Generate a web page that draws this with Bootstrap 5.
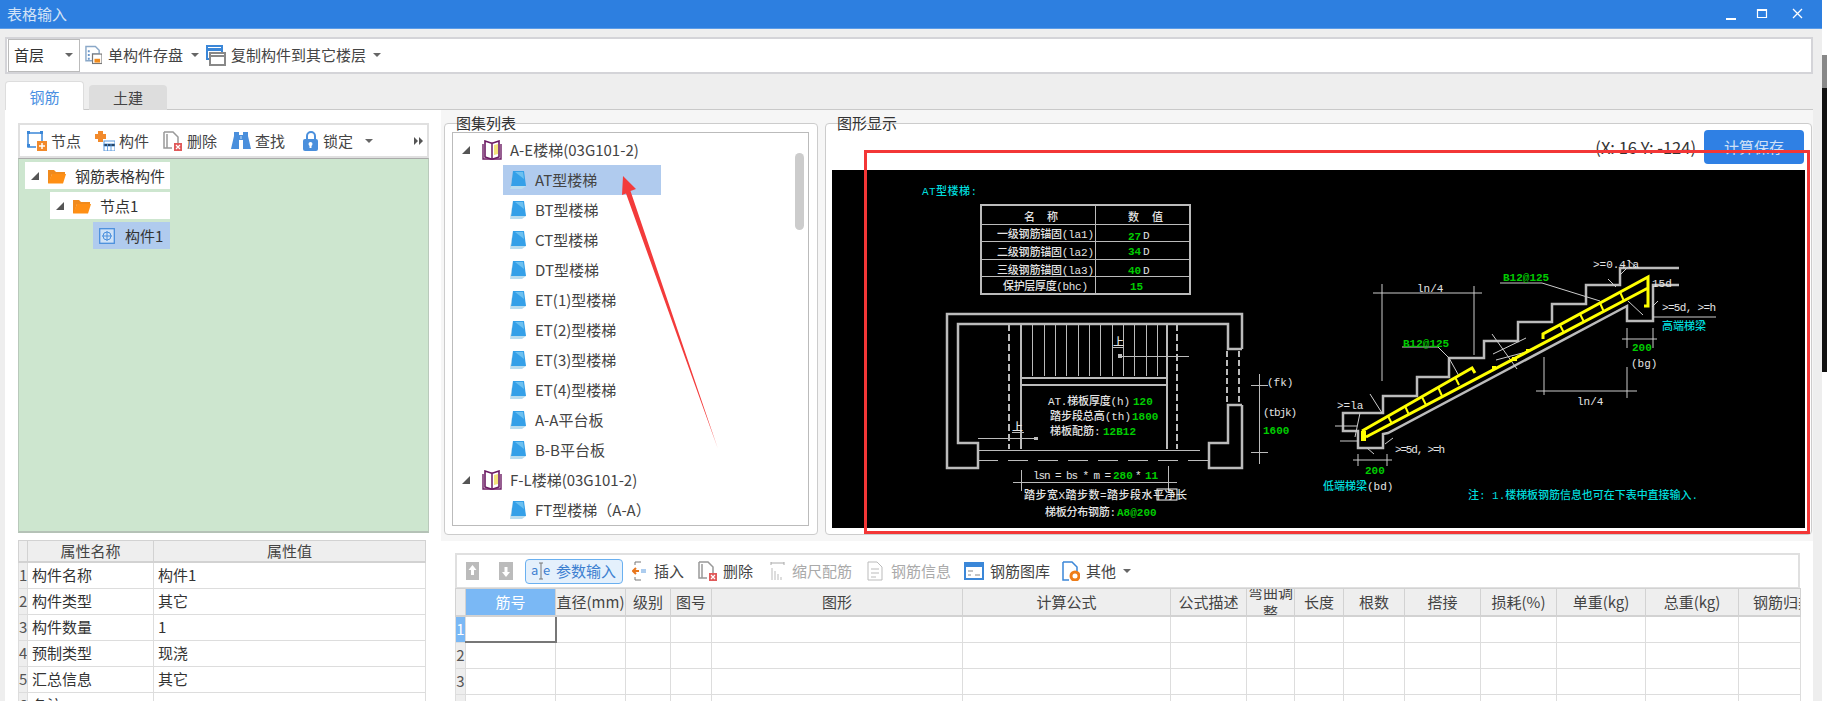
<!DOCTYPE html>
<html lang="zh-CN">
<head>
<meta charset="UTF-8" />
<title>表格输入</title>
<link href="https://cdn.jsdelivr.net/npm/bootstrap@5.3.3/dist/css/bootstrap.min.css" rel="stylesheet" />
<style>
  html, body { height: 701px; overflow: hidden; }
  body { font-family: "Noto Sans CJK SC", "Noto Sans", sans-serif; font-size: 15px; line-height: 20px; color: #444; background: #fff; }
  .shell { width: 1827px; height: 701px; position: relative; }
  .win { width: 1822px; height: 701px; background: #eee; }
  .edge { width: 5px; height: 701px; }
  .edge-gray { height: 33px; margin-top: 55px; background: #888; }
  .edge-black { height: 284px; background: #111; }

  .titlebar { height: 29px; background: #2d7fe0; color: #d3e3f7; padding-left: 7px; border-bottom: 1px solid #5b9ce8; }
  .topbar { height: 38px; margin: 8px 9px 0 5px; background: #fff; border: 2px solid #d4d4d8; padding-left: 1px; }
  .floor-box { width: 72px; height: 33px; border: 1px solid #bbb; padding-left: 5px; padding-right: 6px; margin-right: 5px; color: #333; flex: none; }
  .caret-mark { width: 0; height: 0; border-left: 4px solid transparent; border-right: 4px solid transparent; border-top: 4px solid #666; display: inline-block; flex: none; }
  .tabrow { height: 36px; margin: 0 9px 0 5px; padding-top: 7px; border-bottom: 1px solid #c9c9c9; }
  .tab-on { width: 79px; height: 29px; background: #fff; border: 1px solid #ddd; border-bottom: 0; border-radius: 4px 4px 0 0; color: #4a90e2; text-align: center; line-height: 29px; }
  .tab-off { width: 78px; height: 25px; margin: 4px 0 0 5px; background: #ddd; border-radius: 4px 4px 0 0; text-align: center; line-height: 26px; }

  /* exact toolbar spacing from the picture */
  .gl-5 { margin-left: 5px; } .gl-6 { margin-left: 6px; } .gl-7 { margin-left: 7px; } .gl-8 { margin-left: 8px; } .gl-9 { margin-left: 9px; }
  .gl-12 { margin-left: 12px; } .gl-13 { margin-left: 13px; } .gl-14 { margin-left: 14px; } .gl-15 { margin-left: 15px; } .gl-17 { margin-left: 17px; } .gl-18 { margin-left: 18px; } .gl-20 { margin-left: 20px; }

  .pane { height: 591px; margin: 0 9px 0 5px; background: #fff; }
  .left-col { width: 436px; flex: none; padding: 13px 12px 0 13px; }
  .bar { height: 35px; border: 2px solid #e0e0e0; background: #fff; padding-left: 7px; }
  .bar-item { height: 30px; gap: 4px; }
  .tree-green { height: 375px; background: #cde6cf; border: 1px solid #b9c9bb; border-top-color: #aaa; border-bottom: 2px solid #b5c2b7; padding: 3px 0 0 6px; }
  .node { height: 27px; width: 145px; margin-bottom: 3px; background: #fff; color: #333; padding-left: 6px; }
  .node svg { margin: 0 9px; flex: none; }
  .node-2 { width: 120px; margin-left: 25px; }
  .node-3 { width: 77px; margin-left: 68px; background: #b0cbee; padding-left: 0; }
  .node-3 svg { margin: 0 10px 0 6px; }
  .tri { width: 0; height: 0; border-left: 8px solid transparent; border-bottom: 8px solid #555; display: inline-block; flex: none; }

  .data-grid { table-layout: fixed; border-collapse: collapse; background: #fff; color: #333; }
  .data-grid th, .data-grid td { border: 1px solid #ddd; height: 26px; padding: 0; overflow: hidden; white-space: nowrap; font-weight: 400; }
  .data-grid th { background: #eee; text-align: center; color: #444; border-color: #d2d2d2; border-bottom-width: 2px; }
  .data-grid td.pad { padding-left: 4px; }
  .data-grid .rowno { background: #eee; text-align: center; font-size: 15px; color: #555; }
  .data-grid .hot { background: #7ab8f5; color: #fff; }
  .data-grid td.cur { border-right: 2px solid #777; border-bottom: 2px solid #777; }
  .wrap-head { height: 26px; overflow: hidden; display: flex; align-items: center; white-space: normal; }
  .clip-head { text-align: left !important; padding-left: 14px !important; }
  .prop-grid { width: 407px; margin-top: 7px; }
  .prop-grid th { height: 21px; }

  .right-col { width: 1372px; flex: none; background: #f6f6f6; }
  .upper { height: 430px; padding: 13px 0 0 3px; gap: 7px; }
  .fset { position: relative; flex: none; border: 1px solid #ccc; border-radius: 4px; background: #fff; height: 412px; }
  .fset-title { position: absolute; top: -11px; left: 11px; line-height: 20px; color: #333; }
  .fset-list { width: 374px; padding: 8px 8px 9px 7px; }
  .list-box { height: 394px; border: 1px solid #bbb; position: relative; overflow: hidden; padding: 2px 0 0 9px; }
  .list-row { height: 30px; color: #444; }
  .list-kid { width: 158px; margin-left: 41px; padding-left: 7px; gap: 8px; }
  .list-kid.sel { background: #b0cbee; }
  .list-head svg { margin: 0 8px 0 12px; }
  .scroll-thumb { position: absolute; top: 20px; right: 4px; width: 9px; height: 77px; background: #ccc; border-radius: 5px; }
  .fset-view { width: 987px; padding: 6px 6px 7px 6px; }
  .view-top { height: 34px; gap: 8px; margin-bottom: 6px; padding-right: 1px; }
  .coord-read { font-size: 16.5px; color: #333; }
  .calc-btn { width: 100px; height: 34px; background: #2f80e4; color: #cfe1f7; border: 0; border-radius: 4px; font-size: 15px; padding: 0; }
  .cad-box { height: 358px; background: #000; border: 0; }
  .cad-box svg { display: block; }

  .lower { height: 160px; background: #fff; margin-top: 1px; padding: 12px 0 0 14px; }
  .grid-bar { width: 1345px; height: 35px; border: 2px solid #e0e0e0; border-bottom-width: 1px; padding-left: 9px; }
  .grid-bar svg { flex: none; }
  .lower-grid { width: 1345px; }
  .param-btn { height: 25px; padding: 0 6px 0 5px; gap: 5px; background: #e4f0fc; border: 1px solid #6ab0f0; border-radius: 4px; color: #3c7fd0; }
  .off-text { color: #aaa; }

  .cad-white { fill: #e4e4e4; font-size: 11px; font-family: "Liberation Mono", "Noto Sans CJK SC", monospace; font-weight: 500; }
  .cad-green { fill: #0c0; font-size: 11px; font-family: "Liberation Mono", monospace; font-weight: 700; }
  .cad-cyan { fill: #0dd; font-size: 11px; font-family: "Liberation Mono", "Noto Sans CJK SC", monospace; font-weight: 500; }
  .overlay-marks { position: absolute; left: 0; top: 0; pointer-events: none; }
</style>
</head>
<body>
<svg width="0" height="0" class="d-block">
  <defs>
    <symbol id="i-folder" viewBox="0 0 18 16"><path d="M0 2h6l2 2h9v2H4L1 15H0z" fill="#f08a1c"/><path d="M4 6h14l-3 9.500H0z" fill="#ff8f14"/></symbol>
    <symbol id="i-book" viewBox="0 0 20 20"><path d="M3 1v16l6 2h2l6-2V1l-6 2h-2z" fill="#fff" stroke="#6b1a63" stroke-width="1.600"/><path d="M10 3v15" stroke="#6b1a63" stroke-width="1.500"/><path d="M12 5l4-1v10l-4 1z" fill="#f4e37a"/><path d="M1 4v15h18V4" fill="none" stroke="#6b1a63" stroke-width="1.400"/></symbol>
    <symbol id="i-page" viewBox="0 0 17 20"><path d="M3 1h11l2 15H1z" fill="#35a0e8"/><path d="M1 16h15l-4 3H0z" fill="#b9dcee"/><path d="M3 1L1 16l-1 3z" fill="#9fc6dc"/><path d="M5 2h8l1 7z" fill="#6cc0f0"/></symbol>
    <symbol id="i-sheet" viewBox="0 0 18 20"><path d="M1 1h10l4 4v4H8v7H1z" fill="#fff" stroke="#8aa8c8" stroke-width="1.500"/><path d="M3 5h2v2H3zM3 9h2v2H3zM3 13h2v2H3z" fill="#6a98cc"/><rect x="8" y="9" width="10" height="10" fill="#fff" stroke="#777" stroke-width="1.200"/><rect x="10" y="14" width="6" height="4" fill="#f08a1c"/></symbol>
    <symbol id="i-copy" viewBox="0 0 20 21"><rect x="1" y="1" width="15" height="13" fill="#fff" stroke="#3b87d8" stroke-width="2"/><path d="M1 3h15v3H1z" fill="#3b87d8"/><rect x="4" y="8" width="15" height="12" fill="#fff" stroke="#888" stroke-width="2"/><path d="M4 11h15" stroke="#888" stroke-width="2"/></symbol>
    <symbol id="i-node" viewBox="0 0 20 20"><path d="M1 2h14v8M9 16H1V2" fill="none" stroke="#3b87d8" stroke-width="1.500"/><path d="M0 0h3v3H0zM13 0h3v3h-3zM0 13h3v3H0z" fill="#3b87d8"/><rect x="10" y="10" width="10" height="10" fill="#f28a2b"/><path d="M15 12v6M12 15h6" stroke="#fff" stroke-width="1.500"/></symbol>
    <symbol id="i-comp" viewBox="0 0 20 20"><path d="M3 0h5v3h3v5H8v3H3V8H0V3h3z" fill="#f28a2b"/><rect x="9" y="10" width="11" height="10" fill="#fff" stroke="#5a9ade"/><path d="M9 13h11v2H9zM12.500 13v7M16 13v7" stroke="#5a9ade" stroke-width=".9"/></symbol>
    <symbol id="i-del" viewBox="0 0 20 20"><path d="M1 1h9l5 5v7" fill="#fff" stroke="#999" stroke-width="1.500"/><path d="M1 1v16h8M4 3v14" fill="none" stroke="#999" stroke-width="1.500"/><rect x="11" y="12" width="8" height="8" fill="#e05a5a"/><path d="M13 14l4 4M17 14l-4 4" stroke="#fff" stroke-width="1.200"/></symbol>
    <symbol id="i-find" viewBox="0 0 20 20"><path d="M3 1h5v3h4V1h5v4l3 13h-8V9H8v9H0L3 5z" fill="#4a8fdc"/><path d="M9 5h2v3H9z" fill="#8ab8e8"/></symbol>
    <symbol id="i-lock" viewBox="0 0 16 20"><path d="M4 9V5a4 4 0 018 0v4" fill="none" stroke="#4a8fdc" stroke-width="2"/><rect y="8" width="15" height="12" rx="2" fill="#4a8fdc"/><circle cx="7.500" cy="13" r="2" fill="#fff"/><path d="M6.500 13h2v4h-2z" fill="#fff"/></symbol>
    <symbol id="i-item" viewBox="0 0 16 16"><rect x=".7" y=".7" width="14.600" height="14.600" fill="#cfe2f7" stroke="#4a8fdc" stroke-width="1.300"/><circle cx="8" cy="8" r="4" fill="none" stroke="#4a8fdc"/><path d="M8 3v10M3 8h10" stroke="#4a8fdc"/></symbol>
  </defs>
</svg>

<div class="shell d-flex">
  <div class="win d-flex flex-column">
    <div class="titlebar d-flex justify-content-between align-items-center">
      <span>表格输入</span>
      <svg width="88" height="12" viewBox="0 0 88 12" class="me-2">
        <path d="M0 10h10v2H0z" fill="#fff"/>
        <path d="M31.500 1.500h9v8h-9z" fill="none" stroke="#fff" stroke-width="1.200"/><path d="M31 1h10v2H31z" fill="#fff"/>
        <path d="M67 1l9 9M76 1l-9 9" stroke="#fff" stroke-width="1.300"/>
      </svg>
    </div>

    <div class="topbar d-flex align-items-center">
      <div class="floor-box d-flex align-items-center justify-content-between"><span>首层</span><i class="caret-mark"></i></div>
      <svg width="17" height="20"><use href="#i-sheet"/></svg>
      <span class="gl-6">单构件存盘</span><i class="caret-mark gl-8"></i>
      <svg width="20" height="21" class="gl-7"><use href="#i-copy"/></svg>
      <span class="gl-5">复制构件到其它楼层</span><i class="caret-mark gl-7"></i>
    </div>

    <div class="tabrow d-flex">
      <div class="tab-on">钢筋</div>
      <div class="tab-off">土建</div>
    </div>

    <div class="pane d-flex">
      <div class="left-col">
        <div class="bar d-flex align-items-center">
          <div class="bar-item d-flex align-items-center"><svg width="20" height="20"><use href="#i-node"/></svg>节点</div>
          <div class="bar-item d-flex align-items-center gl-14"><svg width="20" height="20"><use href="#i-comp"/></svg>构件</div>
          <div class="bar-item d-flex align-items-center gl-14"><svg width="20" height="20"><use href="#i-del"/></svg>删除</div>
          <div class="bar-item d-flex align-items-center gl-14"><svg width="20" height="20"><use href="#i-find"/></svg>查找</div>
          <div class="bar-item d-flex align-items-center gl-18"><svg width="16" height="20"><use href="#i-lock"/></svg>锁定<i class="caret-mark gl-8"></i></div>
          <svg width="9" height="8" class="ms-auto me-1"><path d="M0 0l4 4-4 4zM5 0l4 4-4 4z" fill="#555"/></svg>
        </div>
        <div class="tree-green">
          <div class="node d-flex align-items-center"><i class="tri"></i><svg width="18" height="16"><use href="#i-folder"/></svg>钢筋表格构件</div>
          <div class="node node-2 d-flex align-items-center"><i class="tri"></i><svg width="18" height="16"><use href="#i-folder"/></svg>节点1</div>
          <div class="node node-3 d-flex align-items-center"><svg width="16" height="16"><use href="#i-item"/></svg>构件1</div>
        </div>
        <table class="data-grid prop-grid">
          <colgroup><col width="9"><col width="126"><col width="272"></colgroup>
          <thead><tr><th></th><th>属性名称</th><th>属性值</th></tr></thead>
          <tbody>
            <tr><td class="rowno">1</td><td class="pad">构件名称</td><td class="pad">构件1</td></tr>
            <tr><td class="rowno">2</td><td class="pad">构件类型</td><td class="pad">其它</td></tr>
            <tr><td class="rowno">3</td><td class="pad">构件数量</td><td class="pad">1</td></tr>
            <tr><td class="rowno">4</td><td class="pad">预制类型</td><td class="pad">现浇</td></tr>
            <tr><td class="rowno">5</td><td class="pad">汇总信息</td><td class="pad">其它</td></tr>
            <tr><td class="rowno">6</td><td class="pad">备注</td><td></td></tr>
          </tbody>
        </table>
      </div>

      <div class="right-col">
        <div class="upper d-flex">
          <div class="fset fset-list">
            <span class="fset-title">图集列表</span>
            <div class="list-box" id="atlasList">
              <div class="scroll-thumb"></div>
            </div>
          </div>
          <div class="fset fset-view">
            <span class="fset-title">图形显示</span>
            <div class="view-top d-flex justify-content-end align-items-center">
              <span class="coord-read">(X: 16 Y: -124)</span>
              <button class="calc-btn" type="button">计算保存</button>
            </div>
            <div class="cad-box">
              <svg width="973" height="358" viewBox="832 169 973 358">
                <!-- rebar table -->
                <g fill="none" stroke="#bbb" shape-rendering="crispEdges">
                  <rect x="981" y="204" width="209" height="89" stroke-width="2"/>
                  <path d="M1095 204v89M981 223h209M981 240h209M981 258h209M981 275h209"/>
                </g>
                <text class="cad-cyan" x="922" y="194" textLength="55">AT型楼梯:</text>
                <text class="cad-white" x="1024" y="220">名</text><text class="cad-white" x="1047" y="220">称</text>
                <text class="cad-white" x="1128" y="220">数</text><text class="cad-white" x="1152" y="220">值</text>
                <text class="cad-white" x="997" y="237" textLength="97">一级钢筋锚固(la1)</text>
                <text class="cad-white" x="997" y="255" textLength="97">二级钢筋锚固(la2)</text>
                <text class="cad-white" x="997" y="273" textLength="97">三级钢筋锚固(la3)</text>
                <text class="cad-white" x="1003" y="289" textLength="85">保护层厚度(bhc)</text>
                <text class="cad-green" x="1128" y="239">27</text><text class="cad-white" x="1143" y="238">D</text>
                <text class="cad-green" x="1128" y="254">34</text><text class="cad-white" x="1143" y="254">D</text>
                <text class="cad-green" x="1128" y="273">40</text><text class="cad-white" x="1143" y="273">D</text>
                <text class="cad-green" x="1130" y="289">15</text>

                <!-- stair plan -->
                <g fill="none" stroke="#bbb" stroke-width="2.500">
                  <path d="M1242 348V313H947V467H978V442H958V323H1228V348H1242"/>
                  <path d="M1242 404V467H1209V442H1228V404H1242"/>
                  <path d="M1227 350v52M1239 350v52" stroke-width="2" stroke-dasharray="6 3"/>
                  <path d="M1009 323v125M1177 323v125" stroke-width="2" stroke-dasharray="7 3"/>
                </g>
                <g fill="none" stroke="#bbb" shape-rendering="crispEdges">
                  <path d="M1021 323v125M1167 323v125M1021 377h146M1021 384h146" stroke-width="1.500"/>
                  <path d="M1032 323v52M1044 323v52M1055 323v52M1066 323v52M1078 323v52M1089 323v52M1100 323v52M1112 323v52M1123 323v52M1134 323v52M1146 323v52M1157 323v52"/>
                  <path d="M978 449h222"/>
                  <path d="M978 459h231" stroke-dasharray="20 10"/>
                  <path d="M1118 355h71M1112 346h12M978 437h60M1012 431h12"/>
                  <path d="M1259 373v90M1251 384h17M1251 451h17"/>
                  <path d="M1013 481h164M1021 469v21M1168 465v25"/>
                </g>
                <rect x="1118" y="353" width="4" height="4" fill="#bbb"/><rect x="1034" y="436" width="4" height="3" fill="#bbb"/>
                <rect x="1157" y="488" width="20" height="11" fill="none" stroke="#fff"/>
                <text class="cad-white" x="1113" y="345">上</text><text class="cad-white" x="1012" y="430">上</text>
                <text class="cad-white" x="1048" y="404" textLength="82">AT.梯板厚度(h)</text><text class="cad-green" x="1133" y="404">120</text>
                <text class="cad-white" x="1050" y="419" textLength="81">踏步段总高(th)</text><text class="cad-green" x="1132" y="419">1800</text>
                <text class="cad-white" x="1050" y="434">梯板配筋:</text><text class="cad-green" x="1103" y="434">12B12</text>
                <text class="cad-white" x="1267" y="385">(fk)</text><text class="cad-white" x="1263" y="415" textLength="34">(tbjk)</text><text class="cad-green" x="1263" y="433">1600</text>
                <text class="cad-white" x="1033" y="478" textLength="78">lsn = bs * m =</text><text class="cad-green" x="1113" y="478">280</text><text class="cad-white" x="1135" y="478">*</text><text class="cad-green" x="1145" y="478">11</text>
                <text class="cad-white" x="1024" y="498" textLength="163">踏步宽X踏步数=踏步段水平净长</text>
                <text class="cad-white" x="1045" y="515" textLength="71">梯板分布钢筋:</text><text class="cad-green" x="1117" y="515">A8@200</text>

                <!-- stair section -->
                <path d="M1679 267H1620V284H1586V303H1552V321H1518V340H1484V357H1449V376H1417V395H1383V412H1343V430H1358V447H1383V433L1388 432L1627 305V320H1653V284H1679" fill="none" stroke="#bbb" stroke-width="2.500"/>
                <g fill="none" stroke="#ccc">
                  <path d="M1373 292h109M1382 283v97M1474 285v69M1536 390h101M1544 356v38M1627 366v31"/>
                  <path d="M1622 338h35M1627 327v20M1653 327v20M1653 316h63M1353 459h39M1358 453v12M1387 453v12"/>
                  <path d="M1500 282h42l58 18M1402 346h36l11 11l10 18"/>
                  <path d="M1492 333l25 35M1493 353l33-16M1496 359l30-8M1370 393l12 19M1360 412l-5 24M1335 425h22M1340 440h18"/>
                  <path d="M1608 278l8 8M1620 274l8-8M1636 266l-8-7M1628 300l15 14M1658 300l-6 6M1367 447l7 6M1385 443l8-6"/>
                </g>
                <g fill="none" stroke="#ff0" stroke-width="2">
                  <path d="M1362 430L1472 367l3 5M1543 338v-5L1648 276V305H1644M1366 436L1648 287" stroke-width="3"/>
                  <path d="M1388 415l4 8M1405 405l4 9M1422 396l4 8M1438 386l4 9M1455 376l4 8M1560 324l4 8M1580 313l4 8M1600 302l4 9M1620 291l4 9"/>
                </g>
                <path d="M1361 430h5v10h-5z" fill="#ff0"/>
                <path d="M1492 365h4v3h-4zM1512 356h5v4h-5zM1526 348h3v3h-3z" fill="#ff0"/>
                <text class="cad-green" x="1503" y="280">B12@125</text><text class="cad-green" x="1403" y="346">B12@125</text>
                <text class="cad-white" x="1593" y="267" textLength="46">&gt;=0.4la</text>
                <text class="cad-white" x="1652" y="286">15d</text>
                <text class="cad-white" x="1662" y="310" textLength="54">&gt;=5d, &gt;=h</text>
                <text class="cad-cyan" x="1662" y="329">高端梯梁</text>
                <text class="cad-green" x="1632" y="350">200</text>
                <text class="cad-white" x="1631" y="366">(bg)</text>
                <text class="cad-white" x="1417" y="291">ln/4</text><text class="cad-white" x="1577" y="404">ln/4</text>
                <text class="cad-white" x="1337" y="408">&gt;=la</text>
                <text class="cad-white" x="1395" y="452" textLength="50">&gt;=5d, &gt;=h</text>
                <text class="cad-green" x="1365" y="473">200</text>
                <text class="cad-cyan" x="1323" y="489">低端梯梁</text><text class="cad-white" x="1367" y="489">(bd)</text>
                <text class="cad-cyan" x="1468" y="498" textLength="230">注: 1.楼梯板钢筋信息也可在下表中直接输入.</text>
              </svg>
            </div>
          </div>
        </div>

        <div class="lower">
          <div class="grid-bar d-flex align-items-center">
            <svg width="13" height="18"><rect width="13" height="18" fill="#bbb"/><path d="M6.500 3l4 5H8v5H5V8H2.500z" fill="#fff"/></svg>
            <svg width="14" height="18" class="gl-20"><rect width="14" height="18" fill="#bbb"/><path d="M7 15l4-5H8.500V5h-3v5H3z" fill="#fff"/></svg>
            <div class="param-btn d-flex align-items-center gl-12"><svg width="20" height="20"><text x="0" y="14" font-size="13" fill="#3c7fd0">a</text><text x="12" y="14" font-size="13" fill="#3c7fd0">e</text><path d="M10 2v16M8 2h4M8 18h4" stroke="#777"/></svg>参数输入</div>
            <svg width="14" height="20" class="gl-9"><path d="M3 1h6M3 19h6M3 1v3M3 16v3" stroke="#777" fill="none"/><path d="M7 10L1 10M4 7l-3 3 3 3" stroke="#e8761c" stroke-width="2" fill="none"/><path d="M9 9h5M9 11h5" stroke="#5a9ade"/></svg>
            <span class="gl-8">插入</span>
            <svg width="20" height="20" class="gl-14"><use href="#i-del"/></svg><span class="gl-5">删除</span>
            <svg width="15" height="20" class="gl-17"><path d="M1 2h13M1 1v3M14 1v3" stroke="#aaa" fill="none"/><path d="M2 7v12M5 10v9M8 13v6M11 16v3" stroke="#bbb"/></svg>
            <span class="off-text gl-7">缩尺配筋</span>
            <svg width="16" height="20" class="gl-15"><path d="M1 1h9l5 5v13H1z" fill="#fff" stroke="#bbb"/><path d="M4 8h8M4 12h8M4 16h5" stroke="#bbb"/></svg>
            <span class="off-text gl-8">钢筋信息</span>
            <svg width="20" height="18" class="gl-13"><rect x="1" y="1" width="18" height="16" fill="#fff" stroke="#3b87d8" stroke-width="2"/><path d="M1 2h18v3H1z" fill="#3b87d8"/><path d="M4 9h5M4 13h3M11 13h5" stroke="#888"/></svg>
            <span class="gl-6">钢筋图库</span>
            <svg width="18" height="20" class="gl-12"><path d="M1 1h9l5 5v6M1 1v18h6" fill="#fff" stroke="#3b87d8" stroke-width="1.500"/><circle cx="13" cy="15" r="4" fill="none" stroke="#ee7d1a" stroke-width="3"/></svg>
            <span class="gl-6">其他</span><i class="caret-mark gl-7"></i>
          </div>
          <table class="data-grid lower-grid">
            <colgroup><col width="10"><col width="90"><col width="70"><col width="45"><col width="41"><col width="251"><col width="208"><col width="76"><col width="48"><col width="49"><col width="61"><col width="76"><col width="76"><col width="89"><col width="93"><col width="62"></colgroup>
            <thead>
              <tr><th></th><th class="hot">筋号</th><th>直径(mm)</th><th>级别</th><th>图号</th><th>图形</th><th>计算公式</th><th>公式描述</th><th><div class="wrap-head"><div>弯曲调整</div></div></th><th>长度</th><th>根数</th><th>搭接</th><th>损耗(%)</th><th>单重(kg)</th><th>总重(kg)</th><th class="clip-head">钢筋归类</th></tr>
            </thead>
            <tbody id="barRows"></tbody>
          </table>
        </div>
      </div>
    </div>
  </div>
  <div class="edge">
    <div class="edge-gray"></div>
    <div class="edge-black"></div>
  </div>

  <!-- red annotation drawn over the screenshot -->
  <svg class="overlay-marks" width="1827" height="701">
    <rect x="865.500" y="151.500" width="943" height="381" fill="none" stroke="#f33636" stroke-width="3"/>
    <path d="M623 176L636 189L630.500 191L718 449L626 193.500L622 195Z" fill="#f33b3b"/>
  </svg>
</div>

<script src="https://cdn.jsdelivr.net/npm/bootstrap@5.3.3/dist/js/bootstrap.bundle.min.js"></script>
<script>
  // atlas tree
  const atlas = [
    ['A-E楼梯(03G101-2)', ['AT型楼梯', 'BT型楼梯', 'CT型楼梯', 'DT型楼梯', 'ET(1)型楼梯', 'ET(2)型楼梯', 'ET(3)型楼梯', 'ET(4)型楼梯', 'A-A平台板', 'B-B平台板']],
    ['F-L楼梯(03G101-2)', ['FT型楼梯（A-A）']]
  ];
  const box = document.getElementById('atlasList');
  atlas.forEach(([group, kids]) => {
    box.insertAdjacentHTML('beforeend', `<div class="list-row list-head d-flex align-items-center"><i class="tri"></i><svg width="20" height="20"><use href="#i-book"/></svg>${group}</div>`);
    kids.forEach(name => {
      const sel = name === 'AT型楼梯' ? ' sel' : '';
      box.insertAdjacentHTML('beforeend', `<div class="list-row list-kid${sel} d-flex align-items-center"><svg width="17" height="20"><use href="#i-page"/></svg>${name}</div>`);
    });
  });

  // empty rebar rows
  const rows = document.getElementById('barRows');
  for (let r = 1; r <= 4; r++) {
    let cells = `<td class="rowno${r === 1 ? ' hot' : ''}">${r}</td>`;
    for (let c = 0; c < 15; c++) cells += `<td${r === 1 && c === 0 ? ' class="cur"' : ''}></td>`;
    rows.insertAdjacentHTML('beforeend', `<tr>${cells}</tr>`);
  }
</script>
</body>
</html>
